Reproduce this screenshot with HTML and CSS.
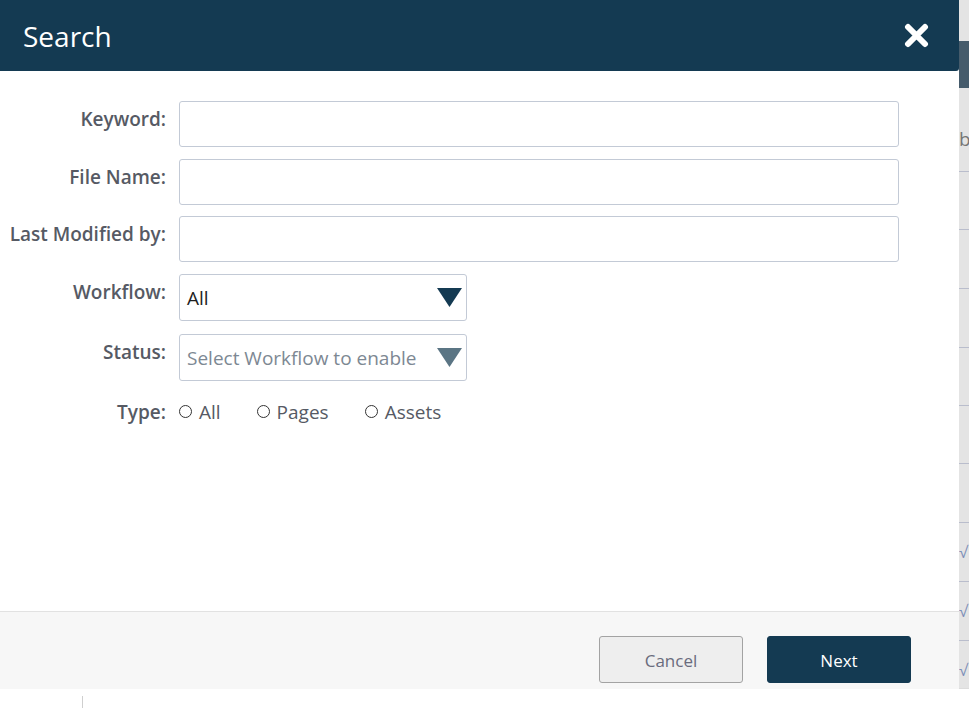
FILE: index.html
```html
<!DOCTYPE html>
<html lang="en">
<head>
<meta charset="utf-8">
<title>Search</title>
<link rel="stylesheet" href="styles.css">
</head>
<body>
<div class="page">
  <div class="page-main">
    <div class="page-topbar"></div>
    <div class="page-row page-head"><span></span><span class="strip-text">b</span></div>
    <div class="page-row r58"></div>
    <div class="page-row"></div>
    <div class="page-row"></div>
    <div class="page-row"></div>
    <div class="page-row r58"></div>
    <div class="page-row"></div>
    <div class="page-row"><span></span><span class="check">√</span></div>
    <div class="page-row"><span></span><span class="check">√</span></div>
    <div class="page-row last"><span></span><span class="check">√</span></div>
  </div>
  <div class="page-bottom"><span class="divider"></span></div>

  <div class="modal">
    <div class="modal-header">
      <h1 class="modal-title">Search</h1>
      <svg class="close" width="25" height="25" viewBox="0 0 25 25" aria-label="Close">
        <path d="M4 4 L21 21 M21 4 L4 21" stroke="#fff" stroke-width="6" stroke-linecap="round" fill="none"/>
      </svg>
    </div>
    <div class="modal-body">
      <div class="form-row">
        <label class="form-label">Keyword:</label>
        <div class="text-input"></div>
      </div>
      <div class="form-row tight">
        <label class="form-label">File Name:</label>
        <div class="text-input"></div>
      </div>
      <div class="form-row">
        <label class="form-label">Last Modified by:</label>
        <div class="text-input"></div>
      </div>
      <div class="form-row loose">
        <label class="form-label">Workflow:</label>
        <div class="select">
          <span class="select-value">All</span>
          <svg class="caret" width="25" height="19" viewBox="0 0 25 19"><polygon points="0,0 25,0 12.5,19" fill="#143a52"/></svg>
        </div>
      </div>
      <div class="form-row">
        <label class="form-label">Status:</label>
        <div class="select disabled">
          <span class="select-value">Select Workflow to enable</span>
          <svg class="caret" width="25" height="19" viewBox="0 0 25 19"><polygon points="0,0 25,0 12.5,19" fill="#5b7584"/></svg>
        </div>
      </div>
      <div class="form-row type-row">
        <label class="form-label">Type:</label>
        <div class="radios">
          <span class="radio-item"><span class="radio"></span>All</span>
          <span class="radio-item"><span class="radio"></span>Pages</span>
          <span class="radio-item"><span class="radio"></span>Assets</span>
        </div>
      </div>
    </div>
    <div class="modal-footer">
      <button class="btn btn-cancel">Cancel</button>
      <button class="btn btn-next">Next</button>
    </div>
  </div>
</div>
</body>
</html>
```

FILE: styles.css
```css
* { box-sizing: border-box; }
html, body { margin: 0; padding: 0; }
body {
  font-family: "Open Sans", "Noto Sans", sans-serif;
  background: #fff;
  width: 969px;
  height: 708px;
  overflow: hidden;
}
.page {
  position: relative;
  width: 969px;
  height: 708px;
  display: flex;
  flex-direction: column;
}
.page-main {
  height: 689px;
  background: #e4e4e4;
  display: flex;
  flex-direction: column;
  overflow: hidden;
}
.page-topbar {
  margin-top: 41px;
  height: 47px;
  background: #455b6b;
}
.page-row {
  display: grid;
  grid-template-columns: 959px 1fr;
  height: 59px;
  border-top: 1px solid #b9bdcc;
}
.page-row.r58 { height: 58px; }
.page-row.last { height: 48px; }
.page-head {
  height: 83px;
  border-top: none;
  padding-top: 40px;
  overflow: hidden;
}
.strip-text {
  font-size: 19px;
  color: #767676;
  line-height: 22px;
  white-space: nowrap;
}
.check {
  font-size: 16px;
  color: #7d8fb8;
  padding-top: 19px;
  line-height: 20px;
}
.page-bottom {
  flex: 1;
  border-top: 1px solid #dcdcdc;
  background: #fff;
  padding: 7px 0 0 82px;
}
.divider {
  display: block;
  width: 1px;
  height: 12px;
  background: #cfcfcf;
}

/* modal */
.modal {
  position: absolute;
  top: 0;
  left: 0;
  width: 959px;
  height: 689px;
  background: #fff;
  display: flex;
  flex-direction: column;
}
.modal-header {
  height: 71px;
  background: #143a52;
  display: flex;
  align-items: center;
  justify-content: space-between;
  padding: 0 30px 0 23px;
  border-bottom-right-radius: 3px;
}
.modal-title {
  margin: 0;
  color: #fff;
  font-size: 28px;
  font-weight: 400;
  line-height: 36px;
}
.close { display: block; }

.modal-body {
  flex: 1;
  padding-top: 30px;
}
.form-row {
  display: flex;
  align-items: flex-start;
  margin-bottom: 12px;
}
.form-row.tight { margin-bottom: 11px; }
.form-row.loose { margin-bottom: 13px; }
.form-row.type-row { padding-top: 1px; }
.form-label {
  width: 166px;
  margin-right: 13px;
  text-align: right;
  font-size: 19px;
  font-weight: 600;
  color: #565a64;
  line-height: 22px;
  padding-top: 7px;
}
.text-input {
  width: 720px;
  height: 46px;
  border: 1px solid #c3cad6;
  border-radius: 3px;
  background: #fff;
}
.select {
  width: 288px;
  height: 47px;
  border: 1px solid #c3cad6;
  border-radius: 3px;
  background: #fff;
  display: flex;
  align-items: center;
  justify-content: space-between;
  padding: 0 4px 0 7px;
}
.select-value {
  font-size: 19px;
  color: #1e1e1e;
}
.select.disabled .select-value { color: #7d8893; }
.caret { display: block; }
.radios {
  display: flex;
  padding-top: 7px;
  line-height: 22px;
  font-size: 19px;
  color: #565a64;
}
.radio-item {
  display: flex;
  align-items: center;
  margin-right: 36px;
}
.radio {
  width: 13px;
  height: 13px;
  border: 1px solid #333;
  border-radius: 50%;
  margin-right: 7px;
  margin-top: -1px;
}

.modal-footer {
  height: 78px;
  border-top: 1px solid #e2e2e2;
  background: #f7f7f7;
  display: flex;
  justify-content: flex-end;
  align-items: flex-start;
  padding: 24px 48px 0 0;
  gap: 24px;
}
.btn {
  width: 144px;
  height: 47px;
  border-radius: 3px;
  font-family: "Open Sans", "Noto Sans", sans-serif;
  font-size: 17px;
  line-height: 22px;
  padding-top: 4px;
  cursor: pointer;
}
.btn-cancel {
  background: #eeeeee;
  border: 1px solid #a3a3a3;
  color: #6a6b7d;
}
.btn-next {
  background: #143a52;
  border: 1px solid #143a52;
  color: #fff;
}
```
